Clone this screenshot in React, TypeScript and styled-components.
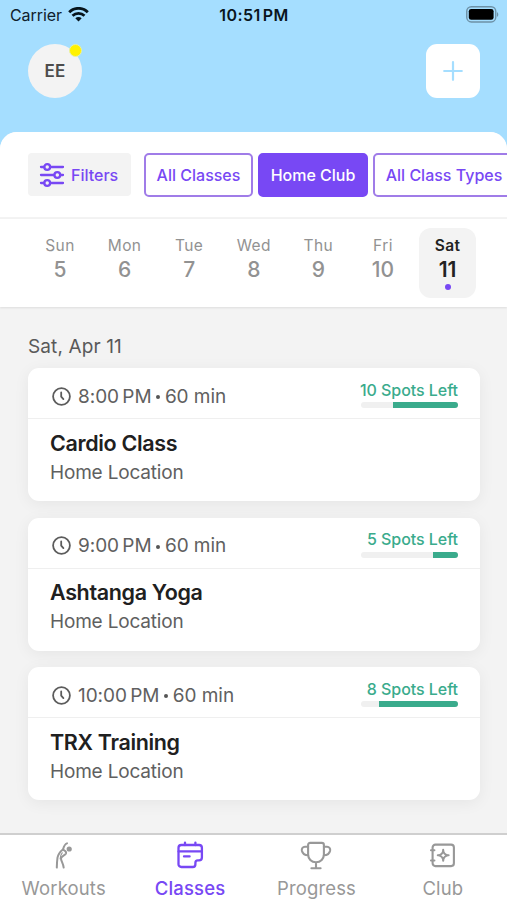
import React from "react";
import styled, { createGlobalStyle } from "styled-components";

const purple = "#7848f4";
const green = "#3aab8c";

const GlobalStyle = createGlobalStyle`
  *, *::before, *::after { box-sizing: border-box; }
  body { margin: 0; font-family: Inter, "Liberation Sans", sans-serif; overflow: hidden; }
  button { font: inherit; border: 0; padding: 0; background: none; }
  svg { display: block; flex: none; }
`;

const Screen = styled.div`
  width: 507px;
  height: 900px;
  display: flex;
  flex-direction: column;
  background: #a5deff;
  overflow: hidden;
`;

const StatusBar = styled.div`
  height: 30px;
  flex: none;
  display: grid;
  grid-template-columns: 1fr auto 1fr;
  align-items: center;
  padding: 0 8px 0 10px;
  color: #10202c;
  font-size: 16px;
  line-height: 30px;
`;

const Carrier = styled.div`
  display: flex;
  align-items: center;
  gap: 7px;
  letter-spacing: -0.08px;

  svg { margin: -2px 0 0 -1px; }
`;

const Clock = styled.div`
  font-weight: 600;
  letter-spacing: 0.42px;
  word-spacing: -2.4px;
  margin-left: -1px;
  color: #0a151d;
`;

const BatterySlot = styled.div`
  display: flex;
  justify-content: flex-end;
  margin-top: -2px;
`;

const Header = styled.header`
  height: 102px;
  flex: none;
  display: flex;
  justify-content: space-between;
  padding: 14px 27px 0 28px;
`;

const Avatar = styled.div`
  position: relative;
  width: 54px;
  height: 54px;
  border-radius: 50%;
  background: #f3f3f3;
  color: #4c4c4c;
  font-size: 17px;
  font-weight: 600;
  letter-spacing: 0.3px;
  display: flex;
  align-items: center;
  justify-content: center;
`;

const AvatarBadge = styled.span`
  position: absolute;
  top: 0;
  right: 0;
  width: 13px;
  height: 13px;
  border-radius: 50%;
  border: 1px solid #e8f1a4;
  background: #fff200;
`;

const AddButton = styled.button`
  width: 54px;
  height: 54px;
  border-radius: 11px;
  background: #fff;
  display: flex;
  align-items: center;
  justify-content: center;
`;

const Panel = styled.main`
  flex: 1;
  min-height: 0;
  display: flex;
  flex-direction: column;
  background: #f3f3f3;
  border-radius: 17px 17px 0 0;
  overflow: hidden;
`;

const FilterBar = styled.div`
  height: 87px;
  flex: none;
  display: flex;
  align-items: flex-start;
  padding: 21px 0 0 28px;
  gap: 5px;
  background: #fff;
  border-bottom: 2px solid #f3f3f3;
`;

const FiltersButton = styled.button`
  width: 103px;
  height: 43px;
  flex: none;
  margin-right: 8px;
  padding-left: 11px;
  display: flex;
  align-items: center;
  gap: 6px;
  border-radius: 4px;
  background: #f3f3f3;
  color: ${purple};
  font-size: 16px;
  font-weight: 500;
`;

const Chip = styled.button<{ $width: number; $active?: boolean }>`
  width: ${(p) => p.$width}px;
  height: 44px;
  flex: none;
  border-radius: 5px;
  border: 2px solid ${(p) => (p.$active ? purple : "#a07ce8")};
  background: ${(p) => (p.$active ? purple : "#fff")};
  color: ${(p) => (p.$active ? "#fff" : purple)};
  font-size: 16px;
  font-weight: 500;
  white-space: nowrap;
`;

const Week = styled.div`
  height: 88px;
  flex: none;
  display: flex;
  padding: 9px 0 0 28px;
  gap: 0.6px;
  background: #fff;
  box-shadow: 0 1px 2px rgba(0, 0, 0, 0.09);
  z-index: 1;
`;

const Day = styled.div<{ $active?: boolean }>`
  width: 64px;
  flex: none;
  display: flex;
  justify-content: center;
  color: ${(p) => (p.$active ? "#222" : "#929292")};
`;

const DayCell = styled.div<{ $active?: boolean }>`
  width: 57px;
  height: 70px;
  padding-top: 8px;
  border-radius: 12px;
  background: ${(p) => (p.$active ? "#f3f3f3" : "transparent")};
  display: flex;
  flex-direction: column;
  align-items: center;
`;

const DayName = styled.span<{ $active?: boolean }>`
  font-size: 15.5px;
  line-height: 20px;
  letter-spacing: 0.4px;
  font-weight: ${(p) => (p.$active ? 600 : 400)};
`;

const DayNumber = styled.span<{ $active?: boolean }>`
  margin-top: 1px;
  font-size: 21px;
  line-height: 26px;
  font-weight: ${(p) => (p.$active ? 600 : 500)};
`;

const DayDot = styled.i`
  width: 6px;
  height: 6px;
  margin-top: 1px;
  border-radius: 50%;
  background: ${purple};
`;

const List = styled.section`
  flex: 1;
  min-height: 0;
  overflow: hidden;
  display: flex;
  flex-direction: column;
  gap: 16.3px;
  padding: 28px 27px 0 28px;
`;

const DateHeading = styled.h2`
  margin: 0 0 -7.3px;
  height: 24px;
  font-size: 19px;
  line-height: 24px;
  letter-spacing: 0.12px;
  font-weight: 400;
  color: #595959;
`;

const Card = styled.article`
  height: 133.3px;
  flex: none;
  border-radius: 11px;
  background: #fff;
  box-shadow: 0 3px 16px rgba(0, 0, 0, 0.06);
`;

const CardHead = styled.div`
  height: 51px;
  padding: 0 22px 0 24px;
  display: flex;
  justify-content: space-between;
  border-bottom: 1.5px solid #efefef;
`;

const Time = styled.div`
  display: flex;
  align-items: center;
  gap: 7px;
  padding-top: 6px;
  font-size: 19px;
  color: #606060;
`;

const TimeText = styled.span`
  display: flex;
  align-items: center;
  gap: 4.7px;
`;

const Bullet = styled.i`
  width: 4px;
  height: 4px;
  margin-top: 2px;
  border-radius: 50%;
  background: #555;
`;

const Hour = styled.span`
  word-spacing: -2px;
  letter-spacing: -0.05px;
`;

const Minutes = styled.span`
  letter-spacing: -0.05px;
`;

const Spots = styled.div`
  display: flex;
  flex-direction: column;
  align-items: flex-end;
  padding-top: 10.6px;
  font-size: 16px;
  line-height: 22px;
  letter-spacing: -0.05px;
  font-weight: 500;
  color: ${green};
`;

const Meter = styled.div`
  width: 97px;
  height: 6px;
  margin-top: 1.4px;
  display: flex;
  justify-content: flex-end;
  border-radius: 3px;
  overflow: hidden;
  background: #f0f0f0;
`;

const MeterFill = styled.div`
  background: ${green};
`;

const ClassName = styled.h3`
  margin: 9.5px 0 0 22px;
  font-size: 21.5px;
  line-height: 28px;
  letter-spacing: -0.34px;
  font-weight: 600;
  color: #202020;
`;

const Place = styled.p`
  margin: 3.3px 0 0 22px;
  font-size: 19px;
  line-height: 26px;
  letter-spacing: -0.18px;
  color: #606060;
`;

const TabBar = styled.nav`
  height: 67px;
  flex: none;
  display: grid;
  grid-template-columns: repeat(4, 126.4px);
  background: #fff;
  border-top: 2px solid #cfcfcf;
`;

const Tab = styled.button<{ $active?: boolean }>`
  display: flex;
  flex-direction: column;
  align-items: center;
  padding: 6px 0 0 1px;
  color: ${(p) => (p.$active ? purple : "#989898")};
  font-size: 18.5px;
  line-height: 24px;
  letter-spacing: 0.15px;
  font-weight: ${(p) => (p.$active ? 500 : 400)};
`;

const TabLabel = styled.span`
  margin-top: 5px;
`;

const WifiIcon = () => (
  <svg width="21" height="15" viewBox="0 0 21 15" fill="none" stroke="#07141c">
    <path d="M1.2 5.2C6.4 .1 14.6 .1 19.8 5.2" strokeWidth="2.9" />
    <path d="M4.5 8.7C7.9 5.5 13.1 5.5 16.5 8.7" strokeWidth="2.8" />
    <path d="M10.5 14.4 7.3 11.3C9.1 9.7 11.9 9.7 13.7 11.3Z" fill="#07141c" stroke="none" />
  </svg>
);

const BatteryIcon = () => (
  <svg width="33" height="17" viewBox="0 0 33 17">
    <rect x=".75" y=".75" width="29" height="15.2" rx="4.6" fill="none" stroke="#6d91a7" strokeWidth="1.4" />
    <rect x="2.8" y="2.9" width="24.8" height="10.9" rx="2.4" fill="#000" />
    <path d="M31 6.2c1.7.7 1.7 3.9 0 4.6Z" fill="#6d91a7" />
  </svg>
);

const PlusIcon = () => (
  <svg width="20" height="20" viewBox="0 0 20 20" fill="none" stroke="#a5deff" strokeWidth="2.2" strokeLinecap="round">
    <path d="M10 1.2v17.6M1.2 10h17.6" />
  </svg>
);

const SlidersIcon = () => (
  <svg width="26" height="26" viewBox="0 0 26 26" fill="none" stroke={purple} strokeWidth="2.3" strokeLinecap="round">
    <path d="M2 5h3.2M11.2 5H24M2 13h13.2M21.4 13H24M2 21h3.2M11.2 21H24" />
    <circle cx="8.2" cy="5" r="2.9" />
    <circle cx="18.3" cy="13" r="2.9" />
    <circle cx="8.2" cy="21" r="2.9" />
  </svg>
);

const ClockIcon = () => (
  <svg width="19" height="19" viewBox="0 0 19 19" fill="none" stroke="#5c5c5c" strokeWidth="1.8" strokeLinecap="round">
    <circle cx="9.5" cy="9.5" r="8.4" />
    <path d="M9.2 5.5v4.1l2.2 2.5" />
  </svg>
);

const WorkoutIcon = () => (
  <svg width="30" height="30" viewBox="0 0 30 30" fill="none" stroke="currentColor" strokeWidth="2" strokeLinecap="round" strokeLinejoin="round">
    <circle cx="20.2" cy="8" r="2.6" fill="currentColor" stroke="none" />
    <path d="M18 2.4C15.6 3.2 14.9 5.2 14.1 8.2C11.2 10.6 9.2 13.2 8.5 16.6C8 20 7.9 23.2 7.8 26.6" />
    <path d="M14.1 8.6C15.8 9.6 17.7 10.2 17 12.3C16.3 14.2 12.9 14.6 12 17.2C11.8 20 14.4 22.6 14.7 26.6" />
    <path d="M13.2 11.8C11.6 13.7 11.3 15.2 11.2 17.8" strokeWidth="1.2" />
  </svg>
);

const CalendarIcon = () => (
  <svg width="30" height="30" viewBox="0 0 30 30" fill="none" stroke="currentColor" strokeWidth="2.3" strokeLinecap="round" strokeLinejoin="round">
    <path d="M17.8 26H6.3a2.8 2.8 0 0 1-2.8-2.8V6.8A2.8 2.8 0 0 1 6.3 4h17.8a2.8 2.8 0 0 1 2.8 2.8v9.6c0 1.9-.9 2.9-2.8 2.9h-1.3a2.4 2.4 0 0 0-2.4 2.4v1.5c0 1.9-.9 2.8-2.6 2.8Z" />
    <path d="M3.6 10.4h23.2M10 1.6V4M20.4 1.6V4M9 15.4h5.6" />
  </svg>
);

const TrophyIcon = () => (
  <svg width="32" height="30" viewBox="0 0 32 30" fill="none" stroke="currentColor" strokeWidth="2.1" strokeLinecap="round" strokeLinejoin="round">
    <path d="M8.1 4c0-1.3.8-2.1 2.1-2.1h11.6c1.3 0 2.1.8 2.1 2.1v9.6c0 4.1-3.2 7.7-7.9 7.7s-7.9-3.6-7.9-7.7ZM16 21.3V27M11.4 27.2h9.2" />
    <path d="M8.1 5.8H5C2.5 5.8 1.5 7.7 1.9 9.7c.6 2.6 2.7 4.4 6.2 4.5M23.9 5.8H27c2.5 0 3.5 1.9 3.1 3.9-.6 2.6-2.7 4.4-6.2 4.5" />
  </svg>
);

const ClubIcon = () => (
  <svg width="30" height="30" viewBox="0 0 30 30" fill="none" stroke="currentColor" strokeWidth="2.1" strokeLinecap="round" strokeLinejoin="round">
    <rect x="4.6" y="3.6" width="21.3" height="21.5" rx="2.8" />
    <path d="M3 9.3h3.4M3 19.5h3.4" />
    <path d="M15.2 8.9v1.1M15.2 18.6v1.1M9.8 14.3h1.1M19.5 14.3h1.1" />
    <path d="M15.2 10.2c.7 2.3 1.8 3.4 4.1 4.1c-2.3.7-3.4 1.8-4.1 4.1c-.7-2.3-1.8-3.4-4.1-4.1c2.3-.7 3.4-1.8 4.1-4.1Z" strokeWidth="1.9" />
  </svg>
);

const days = [
  ["Sun", 5], ["Mon", 6], ["Tue", 7], ["Wed", 8], ["Thu", 9], ["Fri", 10], ["Sat", 11],
] as const;

const classes = [
  { hour: "8:00 PM", name: "Cardio Class", spots: 10, fill: 65 },
  { hour: "9:00 PM", name: "Ashtanga Yoga", spots: 5, fill: 25 },
  { hour: "10:00 PM", name: "TRX Training", spots: 8, fill: 79 },
];

const tabs = [
  { label: "Workouts", Icon: WorkoutIcon },
  { label: "Classes", Icon: CalendarIcon },
  { label: "Progress", Icon: TrophyIcon },
  { label: "Club", Icon: ClubIcon },
];

export default function App() {
  return (
    <>
      <GlobalStyle />
      <Screen>
        <StatusBar>
          <Carrier>Carrier <WifiIcon /></Carrier>
          <Clock>10:51 PM</Clock>
          <BatterySlot><BatteryIcon /></BatterySlot>
        </StatusBar>
        <Header>
          <Avatar>EE<AvatarBadge /></Avatar>
          <AddButton aria-label="Add"><PlusIcon /></AddButton>
        </Header>
        <Panel>
          <FilterBar>
            <FiltersButton><SlidersIcon />Filters</FiltersButton>
            <Chip $width={109}>All Classes</Chip>
            <Chip $width={110} $active>Home Club</Chip>
            <Chip $width={142}>All Class Types</Chip>
          </FilterBar>
          <Week>
            {days.map(([name, number]) => {
              const active = name === "Sat";
              return (
                <Day key={name} $active={active}>
                  <DayCell $active={active}>
                    <DayName $active={active}>{name}</DayName>
                    <DayNumber $active={active}>{number}</DayNumber>
                    {active && <DayDot />}
                  </DayCell>
                </Day>
              );
            })}
          </Week>
          <List>
            <DateHeading>Sat, Apr 11</DateHeading>
            {classes.map((c) => (
              <Card key={c.name}>
                <CardHead>
                  <Time>
                    <ClockIcon />
                    <TimeText><Hour>{c.hour}</Hour><Bullet /><Minutes>60 min</Minutes></TimeText>
                  </Time>
                  <Spots>
                    {c.spots} Spots Left
                    <Meter><MeterFill style={{ width: `${c.fill}px` }} /></Meter>
                  </Spots>
                </CardHead>
                <ClassName>{c.name}</ClassName>
                <Place>Home Location</Place>
              </Card>
            ))}
          </List>
        </Panel>
        <TabBar>
          {tabs.map(({ label, Icon }) => (
            <Tab key={label} $active={label === "Classes"}>
              <Icon />
              <TabLabel>{label}</TabLabel>
            </Tab>
          ))}
        </TabBar>
      </Screen>
    </>
  );
}
